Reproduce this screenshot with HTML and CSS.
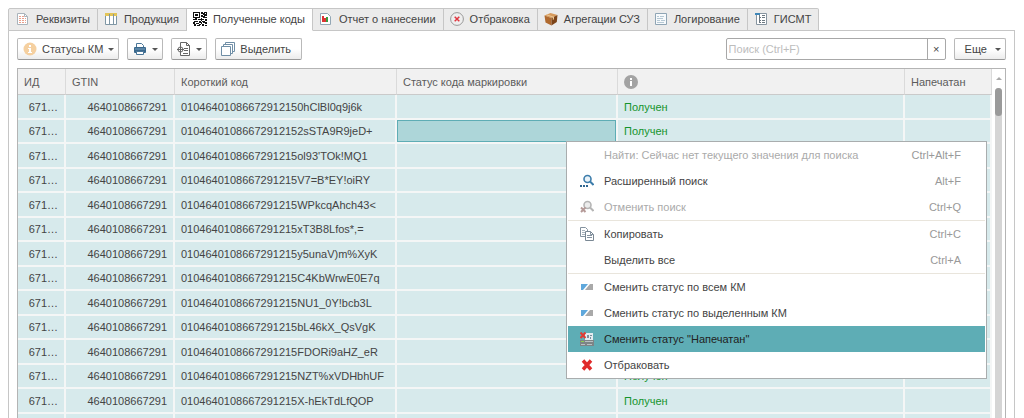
FILE: index.html
```html
<!DOCTYPE html>
<html lang="ru">
<head>
    <meta charset="UTF-8">
    <meta name="viewport" content="width=device-width, initial-scale=1.0">
    <title>Полученные коды</title>
    <link rel="stylesheet" href="styles.css">
</head>
<body>
    <div class="tabs" role="tablist">
        <button class="tab" role="tab">
            <svg class="icon" viewBox="0 0 14 14"><path d="M1.500 1.500h7l3 3v8h-10z" fill="#fff" stroke="#aab4bc"/><path d="M8.500 1.500v3h3" fill="none" stroke="#aab4bc"/><path d="M3 4.500h5M3 6.500h7M3 8.500h7M3 10.500h7" stroke="#e9a08e" stroke-dasharray="2 1"/></svg>
            Реквизиты
        </button>
        <button class="tab" role="tab">
            <svg class="icon" viewBox="0 0 14 14"><path d="M1.500 2.500h11v10h-11z" fill="#fff" stroke="#7f97a5"/><path d="M1 1h12v3H1z" fill="#e3c558"/><path d="M5.500 2v10M9.500 2v10" stroke="#7f97a5"/></svg>
            Продукция
        </button>
        <button class="tab active" role="tab" aria-selected="true">
            <svg class="icon" viewBox="0 0 14 14" shape-rendering="crispEdges"><path d="M0 0h7v6H0zM1 1v4h5V1zM2 2h3v2H2zM8 0h2v2H8zM10 1h1v2h-1zM11 0h3v4h-3zM12 1v1h1V1zM8 3h2v2H8zM10 4h2v2h-2zM12 5h2v1h-2zM0 7h2v1H0zM2 6h2v2H2zM5 7h3v1H5zM8 6h1v3H8zM9 7h2v1H9zM12 7h2v2h-2zM1 9h4v1H1zM6 9h2v2H6zM9 9h3v1H9zM0 10h2v2H0zM3 11h3v1H3zM8 10h1v2H8zM10 10h4v1h-4zM12 11h2v1h-2zM1 12h2v2H1zM4 13h3v1H4zM6 12h2v1H6zM9 12h2v2H9zM12 13h2v1h-2z" fill="#111" fill-rule="evenodd"/></svg>
            Полученные коды
        </button>
        <button class="tab" role="tab">
            <svg class="icon" viewBox="0 0 14 14"><path d="M1.500 1.500h7l3 3v8h-10z" fill="#fff" stroke="#93a7b5"/><path d="M3 4h2v6H3z" fill="#d33"/><path d="M5 6h2v4H5z" fill="#d33"/><path d="M7 5h2v5H7z" fill="#3a9b3f"/></svg>
            Отчет о нанесении
        </button>
        <button class="tab" role="tab">
            <svg class="icon" viewBox="0 0 14 14"><circle cx="7" cy="7" r="6.400" fill="#eee" stroke="#999"/><path d="M4.700 4.700l4.600 4.600M9.300 4.700l-4.600 4.600" stroke="#e0353f" stroke-width="1.500"/></svg>
            Отбраковка
        </button>
        <button class="tab" role="tab">
            <svg class="icon" viewBox="0 0 14 14"><path d="M0.500 3.500l6-2.500 7 2-6 3z" fill="#d79a5c"/><path d="M0.500 3.500l7 2.500v7.500l-6-3z" fill="#b06a2f"/><path d="M7.500 6l6-3-.7 7-5.300 3.500z" fill="#7d4418"/><path d="M3 2.500l7 2.300v2.500L8.800 8V5.500L1.800 3z" fill="#ecc792"/></svg>
            Агрегации СУЗ
        </button>
        <button class="tab" role="tab">
            <svg class="icon" viewBox="0 0 14 14"><path d="M1.500 1.500h11v11h-11z" fill="#f7fafc" stroke="#8fa5b5"/><path d="M3 4.500h2M6 4.500h4M3 6.500h6M3 8.500h3M7 8.500h4M3 10.500h7" stroke="#b5c8d4"/></svg>
            Логирование
        </button>
        <button class="tab" role="tab">
            <svg class="icon" viewBox="0 0 14 14"><path d="M2.500 1.500h10v11h-10z" fill="#fff" stroke="#8795a0"/><path d="M1 1h5v2H1z" fill="#3f87b8"/><path d="M5.500 3v8M5.500 5.500H7M5.500 8.500H7M5.500 10.500H7M8 3.500h3M8 5.500h3M8 8.500h3M8 10.500h3" stroke="#6d7982"/></svg>
            ГИСМТ
        </button>
    </div>

    <div class="panel">
        <div class="toolbar">
            <button class="btn btn-drop">
                <svg class="icon" viewBox="0 0 14 14"><circle cx="7" cy="7" r="6.500" fill="#f5d0a0"/><path d="M6 3h2v2H6zM5 6h3v4h1v1H5v-1h1V7H5z" fill="#fff"/></svg>
                Статусы КМ
                <span class="caret"></span>
            </button>
            <button class="btn btn-drop" aria-label="Печать">
                <svg class="icon" viewBox="0 0 14 14"><path d="M3.500 1.500h5l2 2V6h-7z" fill="#fff" stroke="#4a7698"/><rect x="1" y="5" width="12" height="6" rx="1" fill="#39688d"/><path d="M2 7h10" stroke="#7fa3bf"/><path d="M3.500 9.500h7v3h-7z" fill="#fff" stroke="#4a7698"/></svg>
                <span class="caret"></span>
            </button>
            <button class="btn btn-drop" aria-label="Документ">
                <svg class="icon" viewBox="0 0 14 14"><path d="M3.500 4V.5h6l3 3v10h-9V11" fill="#fff" stroke="#666"/><path d="M9.500.5v3h3M7 6.500h4M7 8.500h4M6 11.500h5" fill="none" stroke="#666"/><circle cx="3.500" cy="7.500" r="2.500" fill="#fff" stroke="#666"/><path d="M3.500 4v7M0 7.500h7" stroke="#666"/></svg>
                <span class="caret"></span>
            </button>
            <button class="btn">
                <svg class="icon" viewBox="0 0 14 14"><path d="M4.500 3V.5h9v9H11M2.500 5V2.500h9v9H9" fill="#fff" stroke="#6f8ea6"/><path d="M.5 4.500h9v9h-9z" fill="#fff" stroke="#6f8ea6"/></svg>
                Выделить
            </button>
            <div class="search">
                <input class="search-input" type="text" placeholder="Поиск (Ctrl+F)" aria-label="Поиск">
                <button class="search-clear" aria-label="Очистить">×</button>
            </div>
            <button class="btn btn-drop btn-more">Еще <span class="caret"></span></button>
        </div>

        <div class="grid">
            <table class="codes">
                <colgroup>
                    <col class="col-id">
                    <col class="col-gtin">
                    <col class="col-code">
                    <col class="col-status">
                    <col>
                    <col class="col-printed">
                </colgroup>
                <thead>
                    <tr>
                        <th>ИД</th>
                        <th>GTIN</th>
                        <th>Короткий код</th>
                        <th>Статус кода маркировки</th>
                        <th><svg class="icon" viewBox="0 0 14 14" role="img" aria-label="Состояние"><circle cx="7" cy="7" r="7" fill="#a3a3a3"/><path d="M6 3h2v2H6zM6 6h2v5H6z" fill="#fff"/></svg></th>
                        <th>Напечатан</th>
                    </tr>
                </thead>
                <tbody>
                    <tr><td>671…</td><td>4640108667291</td><td>01046401086672912150hClBl0q9j6k</td><td></td><td>Получен</td><td></td></tr>
                    <tr><td>671…</td><td>4640108667291</td><td>01046401086672912152sSTA9R9jeD+</td><td class="current"></td><td>Получен</td><td></td></tr>
                    <tr><td>671…</td><td>4640108667291</td><td>0104640108667291215ol93'TOk!MQ1</td><td></td><td></td><td></td></tr>
                    <tr><td>671…</td><td>4640108667291</td><td>0104640108667291215V7=B*EY!oiRY</td><td></td><td></td><td></td></tr>
                    <tr><td>671…</td><td>4640108667291</td><td>0104640108667291215WPkcqAhch43&lt;</td><td></td><td></td><td></td></tr>
                    <tr><td>671…</td><td>4640108667291</td><td>0104640108667291215xT3B8Lfos*,=</td><td></td><td></td><td></td></tr>
                    <tr><td>671…</td><td>4640108667291</td><td>0104640108667291215y5unaV)m%XyK</td><td></td><td></td><td></td></tr>
                    <tr><td>671…</td><td>4640108667291</td><td>0104640108667291215C4KbWrwE0E7q</td><td></td><td></td><td></td></tr>
                    <tr><td>671…</td><td>4640108667291</td><td>0104640108667291215NU1_0Y!bcb3L</td><td></td><td></td><td></td></tr>
                    <tr><td>671…</td><td>4640108667291</td><td>0104640108667291215bL46kX_QsVgK</td><td></td><td></td><td></td></tr>
                    <tr><td>671…</td><td>4640108667291</td><td>0104640108667291215FDORi9aHZ_eR</td><td></td><td></td><td></td></tr>
                    <tr><td>671…</td><td>4640108667291</td><td>0104640108667291215NZT%xVDHbhUF</td><td></td><td>Получен</td><td></td></tr>
                    <tr><td>671…</td><td>4640108667291</td><td>0104640108667291215X-hEkTdLfQOP</td><td></td><td>Получен</td><td></td></tr>
                    <tr><td></td><td></td><td></td><td></td><td></td><td></td></tr>
                </tbody>
            </table>
            <div class="scrollbar">
                <span class="scroll-up"></span>
                <div class="scroll-track"><div class="scroll-thumb"></div></div>
            </div>
        </div>
    </div>

    <div class="menu" role="menu">
        <button class="menu-item" role="menuitem" disabled>
            <span class="icon"></span>
            <span class="menu-label">Найти: Сейчас нет текущего значения для поиска</span>
            <span class="shortcut">Ctrl+Alt+F</span>
        </button>
        <button class="menu-item" role="menuitem">
            <svg class="icon" viewBox="0 0 14 14"><circle cx="7.500" cy="5" r="3.500" fill="#eaf3f9" stroke="#3d7dab" stroke-width="1.600"/><path d="M10 7.500l3.500 3.500" stroke="#3d7dab" stroke-width="2"/><path d="M0 11h2v2H0zM3 11h2v2H3zM6 11h2v2H6z" fill="#2f6690"/></svg>
            <span class="menu-label">Расширенный поиск</span>
            <span class="shortcut">Alt+F</span>
        </button>
        <button class="menu-item" role="menuitem" disabled>
            <svg class="icon" viewBox="0 0 14 14"><circle cx="7.500" cy="5" r="3.500" fill="#ececec" stroke="#b5b5b5" stroke-width="1.600"/><path d="M10 7.500l3.500 3.500" stroke="#b5b5b5" stroke-width="2"/><path d="M1 7.500l4.500 4.500M5.500 7.500L1 12" stroke="#b59a98" stroke-width="2"/></svg>
            <span class="menu-label">Отменить поиск</span>
            <span class="shortcut">Ctrl+Q</span>
        </button>
        <div class="separator" role="separator"></div>
        <button class="menu-item" role="menuitem">
            <svg class="icon" viewBox="0 0 14 14"><path d="M.5.5h5l2 2v7h-7z" fill="#fff" stroke="#8593a0"/><path d="M2 3.500h3M2 5.500h3M2 7.500h3" stroke="#a9b3bc"/><path d="M5.500 4.500h5l3 3v6h-8z" fill="#fff" stroke="#7a8894"/><path d="M10.500 4.500v3h3M7 8.500h5M7 10.500h5" fill="none" stroke="#8593a0"/></svg>
            <span class="menu-label">Копировать</span>
            <span class="shortcut">Ctrl+C</span>
        </button>
        <button class="menu-item" role="menuitem">
            <span class="icon"></span>
            <span class="menu-label">Выделить все</span>
            <span class="shortcut">Ctrl+A</span>
        </button>
        <div class="separator" role="separator"></div>
        <button class="menu-item" role="menuitem">
            <svg class="icon" viewBox="0 0 14 14"><path d="M1 4h7L3 10H1z" fill="#5fa8dc"/><path d="M10 4h3v6H5z" fill="#a9a9a9"/></svg>
            <span class="menu-label">Сменить статус по всем КМ</span>
        </button>
        <button class="menu-item" role="menuitem">
            <svg class="icon" viewBox="0 0 14 14"><path d="M1 4h7L3 10H1z" fill="#5fa8dc"/><path d="M10 4h3v6H5z" fill="#a9a9a9"/></svg>
            <span class="menu-label">Сменить статус по выделенным КМ</span>
        </button>
        <button class="menu-item selected" role="menuitem">
            <svg class="icon" viewBox="0 0 14 14"><path d="M5 1h8v7H5z" fill="#e4ecf0"/><path d="M7 3h2v3H7zM10 3h2v1h-2zM10 5h1v2h-1z" fill="#7b8f9c"/><path d="M0 8h14v6H0z" fill="#7d8486"/><path d="M1 9h3v1H1z" fill="#8ccf4d"/><path d="M5 9h8v1H5zM1 12h4v1H1zM7 12h5v1H7z" fill="#b9c0c2"/><path d="M.5.500l5 5.500M5.500.500L.5 6" stroke="#e23b33" stroke-width="2"/></svg>
            <span class="menu-label">Сменить статус "Напечатан"</span>
        </button>
        <button class="menu-item" role="menuitem">
            <svg class="icon" viewBox="0 0 14 14"><path d="M3 2.500l8 9M11 2.500l-8 9" stroke="#e02a2a" stroke-width="3.400"/></svg>
            <span class="menu-label">Отбраковать</span>
        </button>
    </div>
</body>
</html>
```
FILE: styles.css
```css
* {
    box-sizing: border-box;
}

body {
    display: flex;
    flex-direction: column;
    height: 100vh;
    margin: 0;
    padding: 8px 9px 0 8px;
    overflow: hidden;
    background: #fff;
    color: #444;
    font-family: "Liberation Sans", Arial, sans-serif;
    font-size: 11px;
}

button,
input {
    font: inherit;
    color: inherit;
    margin: 0;
}

.icon {
    flex: none;
    display: block;
    width: 14px;
    height: 14px;
}

/* tabs */
.tabs {
    display: flex;
    flex: none;
    position: relative;
    z-index: 1;
}

.tab {
    display: flex;
    align-items: center;
    gap: 6px;
    height: 23px;
    padding: 0 7px 1px 6px;
    border: 1px solid #c6c6c6;
    border-left-width: 0;
    background: #ebebeb;
    white-space: nowrap;
}

.tab:first-child {
    padding-left: 7px;
    border-left-width: 1px;
    border-top-left-radius: 2px;
}

.tab:last-child {
    border-top-right-radius: 2px;
}

.tab.active {
    background: #fff;
    border-bottom-color: #fff;
}

.panel {
    display: flex;
    flex-direction: column;
    flex: 1;
    min-height: 0;
    margin-top: -1px;
    padding: 7px 8px 0;
    border: 1px solid #c6c6c6;
    border-bottom: 0;
}

/* toolbar */
.toolbar {
    display: flex;
    align-items: center;
    gap: 8px;
    flex: none;
    margin-bottom: 8px;
}

.btn {
    display: flex;
    align-items: center;
    gap: 5px;
    height: 22px;
    padding: 0 10px 0 5px;
    border: 1px solid #b9b9b9;
    border-bottom-color: #999;
    border-radius: 2px;
    background: linear-gradient(#fff 50%, #ececec);
    white-space: nowrap;
}

.btn-drop {
    padding-right: 4px;
}

.btn-more {
    gap: 8px;
    padding-left: 10px;
}

.caret {
    border: 3px solid transparent;
    border-top-color: #555;
    border-bottom-width: 0;
}

.search {
    display: flex;
    width: 220px;
    height: 22px;
    margin-left: auto;
    border: 1px solid #a8a8a8;
    border-radius: 2px;
}

.search-input {
    flex: 1;
    min-width: 0;
    padding: 0 2px;
    border: 0;
    background: none;
}

.search-input::placeholder {
    color: #bdbdbd;
    opacity: 1;
}

.search-clear {
    width: 18px;
    padding: 0;
    border: 0;
    border-left: 1px solid #a8a8a8;
    background: none;
}

/* list of codes */
.grid {
    display: flex;
    flex: 1;
    align-items: flex-start;
    min-height: 0;
    border: 1px solid #b4b4b4;
    border-bottom: 0;
    overflow: hidden;
}

.codes {
    flex: 1;
    width: 0;
    table-layout: fixed;
    border-collapse: separate;
    border-spacing: 0;
}

.col-id {
    width: 48px;
}

.col-gtin {
    width: 109px;
}

.col-code {
    width: 222px;
}

.col-status {
    width: 221px;
}

.col-printed {
    width: 87px;
}

.codes th {
    height: 26px;
    padding: 0 6px;
    border-right: 1px solid #dadada;
    border-bottom: 1px solid #cacaca;
    background: #f1f1f1;
    color: #5c5c5c;
    font-weight: normal;
    text-align: left;
}

.codes td {
    height: 24px;
    padding: 0 6px;
    border: solid #f4f6f6;
    border-width: 0 2px 2px 0;
    background: #d7eaec;
    white-space: nowrap;
}

.codes tbody tr:nth-child(odd) td {
    height: 25px;
}

.codes td:nth-child(1),
.codes td:nth-child(2) {
    text-align: right;
}

.codes td:nth-child(5) {
    color: #16942c;
}

.codes td.current {
    background: #add6d9;
    box-shadow: inset 0 0 0 1px #5eadb5;
}

.scrollbar {
    display: flex;
    flex-direction: column;
    align-items: center;
    align-self: stretch;
    width: 13px;
}

.scroll-up {
    margin: 8px 0;
    border: 3px solid transparent;
    border-bottom-color: #aaa;
    border-top-width: 0;
}

.scroll-track {
    flex: 1;
    width: 7px;
    border-radius: 4px 4px 0 0;
    background: #d5d5d5;
}

.scroll-thumb {
    height: 28px;
    border-radius: 4px;
    background: #9a9a9a;
}

/* context menu */
.menu {
    position: absolute;
    top: 141px;
    left: 566px;
    z-index: 2;
    width: 421px;
    padding: 0 1px;
    border: 1px solid #a9adae;
    background: #fff;
}

.menu-item {
    display: flex;
    align-items: center;
    gap: 10px;
    width: 100%;
    height: 26px;
    padding: 0 24px 0 12px;
    border: 0;
    background: none;
    text-align: left;
    white-space: nowrap;
}

.menu-label {
    flex: 1;
}

.shortcut {
    color: #999;
}

.menu-item:disabled {
    color: #aaa;
}

.menu-item.selected {
    background: #5eadb5;
    color: #222;
}

.separator {
    height: 1px;
    background: #e9e5dc;
}
```
